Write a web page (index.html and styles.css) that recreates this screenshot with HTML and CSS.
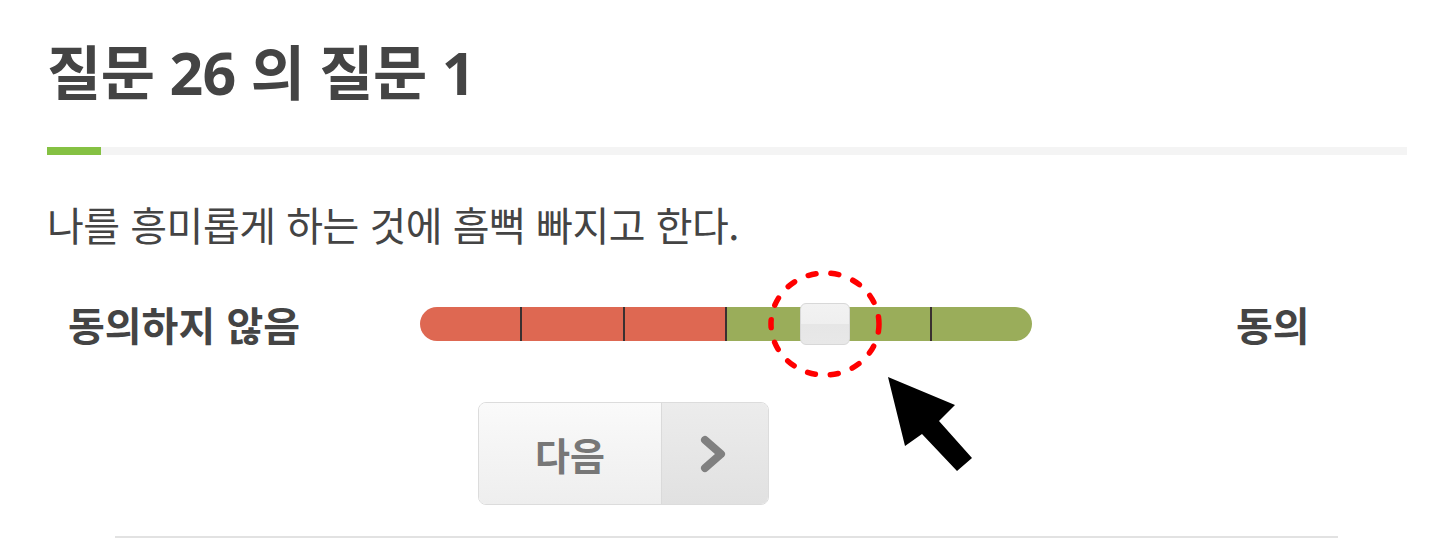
FILE: index.html
```html
<!DOCTYPE html>
<html lang="ko">
<head>
<meta charset="utf-8">
<link rel="stylesheet" href="styles.css">
</head>
<body>
<div class="page">
  <h1 class="title">질문 26 의 질문 1</h1>
  <div class="progress"><div class="progress-fill"></div></div>
  <p class="question">나를 흥미롭게 하는 것에 흠뻑 빠지고 한다.</p>
  <div class="scale-row">
    <div class="label label-left">동의하지 않음</div>
    <div class="slider">
      <div class="seg red"></div>
      <div class="seg red tick"></div>
      <div class="seg red tick"></div>
      <div class="seg green tick"></div>
      <div class="seg green tick"></div>
      <div class="seg green tick"></div>
      <div class="handle"></div>
      <svg class="ring" width="120" height="116" viewBox="0 0 120 116">
        <ellipse cx="60" cy="58" rx="54" ry="51" fill="none" stroke="#f00" stroke-width="5.5" stroke-linecap="round" stroke-dasharray="8 15"/>
      </svg>
    </div>
    <div class="label label-right">동의</div>
    <svg class="cursor" width="100" height="110" viewBox="0 0 100 110">
      <polygon points="4,2 21,71 38,59 73,96 88,83 55,46 71,30" fill="#000"/>
    </svg>
  </div>
  <div class="btn-row">
    <button class="next-btn">
      <span class="next-text">다음</span>
      <span class="next-arrow">
        <svg width="34" height="38" viewBox="0 0 34 38"><path d="M9 5 L25 19 L9 33" fill="none" stroke="#808080" stroke-width="8" stroke-linejoin="round" stroke-linecap="round"/></svg>
      </span>
    </button>
  </div>
  <div class="bottom-line"></div>
</div>
</body>
</html>
```

FILE: styles.css
```css
html, body {
  margin: 0;
  padding: 0;
  background: #fff;
}
body {
  font-family: "Open Sans", "Noto Sans CJK KR", sans-serif;
  color: #444;
}
.page {
  width: 1448px;
  height: 547px;
  overflow: hidden;
  position: relative;
}
.title {
  margin: 0;
  padding: 36px 0 0 47px;
  font-size: 59px;
  font-weight: 700;
  line-height: 72px;
  color: #444;
  letter-spacing: -0.5px;
}
.progress {
  margin: 39px 0 0 47px;
  width: 1360px;
  height: 8px;
  background: #f4f4f4;
}
.progress-fill {
  width: 54px;
  height: 8px;
  background: #85c143;
}
.question {
  margin: 44px 0 0 47px;
  font-family: "Noto Sans CJK KR", sans-serif;
  font-size: 40px;
  line-height: 50px;
  font-weight: 400;
  color: #444;
  letter-spacing: -0.5px;
}
.scale-row {
  position: relative;
  display: flex;
  align-items: center;
  margin-top: 55px;
  height: 40px;
}
.label {
  font-family: "Noto Sans CJK KR", sans-serif;
  font-weight: 700;
  font-size: 40px;
  color: #444;
  line-height: 40px;
  white-space: nowrap;
}
.label-left {
  padding-left: 68px;
  width: 420px;
  box-sizing: border-box;
  flex: none;
}
.label-right {
  margin-left: 204px;
}
.slider {
  position: relative;
  display: flex;
  flex: none;
  width: 612px;
  height: 34px;
  border-radius: 17px;
}
.seg {
  flex: 1;
  height: 34px;
  box-sizing: border-box;
}
.seg.red { background: #de6852; }
.seg.green { background: #9aad5a; }
.seg.tick { border-left: 2px solid #3a3030; }
.seg:first-child { border-radius: 17px 0 0 17px; }
.seg:nth-child(6) { border-radius: 0 17px 17px 0; }
.handle {
  position: absolute;
  left: 380px;
  top: -4px;
  width: 50px;
  height: 42px;
  box-sizing: border-box;
  border: 1px solid #d8d8d8;
  border-radius: 6px;
  background: linear-gradient(#f2f2f2 0%, #efefef 50%, #e6e6e6 51%, #e8e8e8 100%);
}
.ring {
  position: absolute;
  left: 345px;
  top: -41px;
}
.cursor {
  position: absolute;
  left: 884px;
  top: 71px;
}
.btn-row {
  margin: 58px 0 0 478px;
}
.next-btn {
  display: flex;
  padding: 0;
  width: 291px;
  height: 103px;
  border: 1px solid #dcdcdc;
  border-radius: 8px;
  overflow: hidden;
  background: none;
  font-family: "Noto Sans CJK KR", sans-serif;
}
.next-text {
  width: 182px;
  height: 100%;
  display: flex;
  align-items: center;
  justify-content: center;
  font-size: 38px;
  font-weight: 700;
  color: #777;
  background: linear-gradient(#fafafa, #eeeeee);
  border-right: 1px solid #dadada;
}
.next-arrow {
  flex: 1;
  display: flex;
  align-items: center;
  justify-content: center;
  background: linear-gradient(#ececec, #e1e1e1);
  padding-right: 4px;
}
.bottom-line {
  margin: 31px 0 0 115px;
  width: 1223px;
  height: 2px;
  background: #e2e2e2;
}
```
